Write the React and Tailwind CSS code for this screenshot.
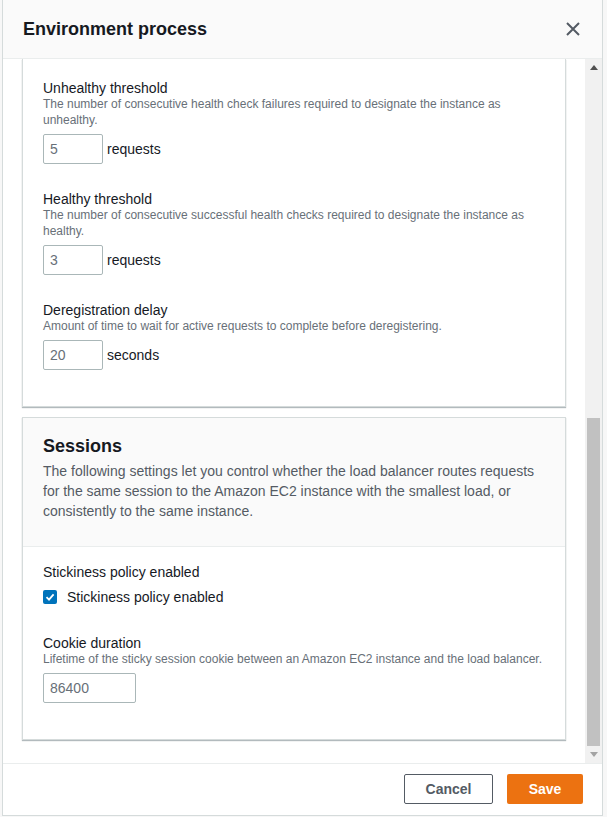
import React from 'react';

const font = { fontFamily: '"Liberation Sans", Arial, sans-serif' };

function NumberField({ label, help, value, unit, width = 'w-[60px]' }) {
  return (
    <div>
      <div className="text-[14px] leading-[16px] text-[#16191f]">{label}</div>
      <div className="text-[12px] leading-[16px] text-[#687078]">{help}</div>
      <div className="mt-[6px] flex items-center gap-[4px]">
        <div className={`${width} h-[30px] border border-[#aab7b8] rounded-[2px] bg-white flex items-center pl-[6px] text-[14px] text-[#687078]`}>
          {value}
        </div>
        {unit && <span className="text-[14px] text-[#16191f]">{unit}</span>}
      </div>
    </div>
  );
}

function Scrollbar() {
  return (
    <div className="w-[17px] h-full bg-[#f1f1f1] flex flex-col">
      <div className="h-[17px] flex items-center justify-center">
        <svg width="8" height="5" viewBox="0 0 8 5"><path d="M4 0L8 5H0z" fill="#505050" /></svg>
      </div>
      <div className="flex-1 px-[2px]">
        <div className="mt-[342px] h-[328px] bg-[#c1c1c1]" />
      </div>
      <div className="h-[17px] flex items-center justify-center">
        <svg width="8" height="5" viewBox="0 0 8 5"><path d="M0 0H8L4 5z" fill="#a3a3a3" /></svg>
      </div>
    </div>
  );
}

export default function App() {
  return (
    <div className="w-[607px] h-[817px] bg-[#f7f7f7] overflow-hidden" style={font}>
      <div className="ml-[2px] w-[601px] h-[816px] bg-white border-x border-b border-[#d5dbdb] flex flex-col">
        {/* Header */}
        <div className="h-[59px] shrink-0 bg-[#fafafa] border-b border-[#eaeded] flex items-center justify-between pl-[20px] pr-[22px]">
          <h2 className="text-[18px] font-bold text-[#16191f]">Environment process</h2>
          <svg width="14" height="14" viewBox="0 0 14 14">
            <path d="M1 1L13 13M13 1L1 13" stroke="#545b64" strokeWidth="2" />
          </svg>
        </div>

        {/* Body */}
        <div className="h-[704px] shrink-0 flex overflow-hidden">
          <div className="flex-1 px-[19px]">
            <div className="border-x border-b border-[#d5dbdb] shadow-[0_1px_1px_0_rgba(0,28,36,0.3)] bg-white px-[20px] pt-[21px] pb-[36px] flex flex-col gap-[27px]">
              <NumberField
                label="Unhealthy threshold"
                help="The number of consecutive health check failures required to designate the instance as unhealthy."
                value="5"
                unit="requests"
              />
              <NumberField
                label="Healthy threshold"
                help="The number of consecutive successful health checks required to designate the instance as healthy."
                value="3"
                unit="requests"
              />
              <NumberField
                label="Deregistration delay"
                help="Amount of time to wait for active requests to complete before deregistering."
                value="20"
                unit="seconds"
              />
            </div>

            <div className="mt-[10px] border border-[#d5dbdb] shadow-[0_1px_1px_0_rgba(0,28,36,0.3)] bg-white">
              <div className="bg-[#fafafa] border-b border-[#eaeded] px-[20px] pt-[16px] pb-[25px]">
                <h3 className="text-[18px] leading-[24px] font-bold text-[#16191f]">Sessions</h3>
                <p className="mt-[3px] text-[14px] leading-[20px] text-[#545b64]">
                  The following settings let you control whether the load balancer routes requests for the same session to the Amazon EC2 instance with the smallest load, or consistently to the same instance.
                </p>
              </div>
              <div className="px-[20px] pt-[17px] pb-[36px]">
                <div className="text-[14px] leading-[16px] text-[#16191f]">Stickiness policy enabled</div>
                <div className="mt-[7px] h-[20px] flex items-center gap-[10px]">
                  <span className="w-[14px] h-[14px] rounded-[2px] bg-[#0073bb] flex items-center justify-center">
                    <svg width="10" height="10" viewBox="0 0 10 10">
                      <path d="M1.5 5.2L4 7.6L8.6 2.4" stroke="white" strokeWidth="1.8" fill="none" />
                    </svg>
                  </span>
                  <span className="text-[14px] text-[#16191f]">Stickiness policy enabled</span>
                </div>
                <div className="mt-[28px]">
                  <NumberField
                    label="Cookie duration"
                    help="Lifetime of the sticky session cookie between an Amazon EC2 instance and the load balancer."
                    value="86400"
                    width="w-[93px]"
                  />
                </div>
              </div>
            </div>
          </div>
          <Scrollbar />
        </div>

        {/* Footer */}
        <div className="flex-1 border-t border-[#eaeded] flex justify-end items-start gap-[14px] pt-[10px] pr-[19px]">
          <button className="w-[89px] h-[30px] border border-[#545b64] rounded-[2px] bg-white text-[14px] font-bold text-[#545b64]">
            Cancel
          </button>
          <button className="w-[76px] h-[30px] rounded-[2px] bg-[#ec7211] text-[14px] font-bold text-white">
            Save
          </button>
        </div>
      </div>
    </div>
  );
}
